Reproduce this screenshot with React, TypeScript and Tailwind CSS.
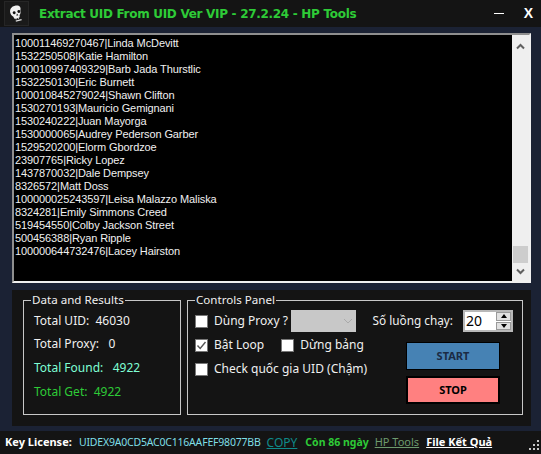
const rows = [
  "100011469270467|Linda McDevitt",
  "1532250508|Katie Hamilton",
  "100010997409329|Barb Jada Thurstlic",
  "1532250130|Eric Burnett",
  "100010845279024|Shawn Clifton",
  "1530270193|Mauricio Gemignani",
  "1530240222|Juan Mayorga",
  "1530000065|Audrey Pederson Garber",
  "1529520200|Elorm Gbordzoe",
  "23907765|Ricky Lopez",
  "1437870032|Dale Dempsey",
  "8326572|Matt Doss",
  "100000025243597|Leisa Malazzo Maliska",
  "8324281|Emily Simmons Creed",
  "519454550|Colby Jackson Street",
  "500456388|Ryan Ripple",
  "100000644732476|Lacey Hairston",
];

function Check({ label, checked }: { label: string; checked?: boolean }) {
  return (
    <div className="flex items-center gap-[6px] whitespace-nowrap">
      <div className="w-[13px] h-[13px] bg-white border border-[#777] flex items-center justify-center">
        {checked && (
          <svg width="11" height="11" viewBox="0 0 11 11" fill="none" stroke="#555" strokeWidth="1.4">
            <path d="M1.5 5.5L4.2 8.5L9.5 2" />
          </svg>
        )}
      </div>
      <span>{label}</span>
    </div>
  );
}

export default function App() {
  return (
    <div className="relative w-[541px] h-[454px] overflow-hidden bg-[#1b2234] flex flex-col text-[12px] text-[#f0f0f0] font-['Noto_Sans','Open_Sans',sans-serif]">
      {/* title bar */}
      <div className="h-[27px] bg-[#141414] flex items-center shrink-0">
        <div className="w-[25px] h-[25px] ml-[4px] bg-[#1a1a1a] border border-[#262626] flex items-center justify-center">
          <svg className="-rotate-[15deg]" width="14" height="18" viewBox="0 0 14 18">
            <path fill="#f2f2f2" d="M7 0.5C3 0.5 0.8 3 0.8 6.4c0 2 .8 3.4 2 4.3l.4 2.2h1l.3 1.2h.8l.2-1h1l.2 1h.8l.3-1.2h1l.4-2.2c1.2-.9 2-2.3 2-4.3C13.2 3 11 .5 7 .5z" />
            <circle cx="4.6" cy="7" r="1.5" fill="#111" />
            <circle cx="9.4" cy="7" r="1.5" fill="#111" />
            <path fill="#111" d="M7 8.6l1 2H6z" />
            <path fill="#ddd" d="M4 15h6v1.2H4z" />
          </svg>
        </div>
        <div className="ml-[10px] text-[#2ecb37] text-[12px] font-bold font-['DejaVu_Sans',sans-serif] whitespace-nowrap tracking-[-0.3px]">
          Extract UID From UID Ver VIP - 27.2.24 - HP Tools
        </div>
        <div className="ml-auto flex items-center">
          <div className="w-[10px] h-[1.5px] bg-white mr-[20px]"></div>
          <div className="text-white font-bold text-[14px] mr-[8px] font-['Liberation_Sans',sans-serif]">X</div>
        </div>
      </div>

      {/* result list */}
      <div className="mt-[6px] ml-[12px] mr-[10px] h-[250px] shrink-0 flex bg-black border-t-2 border-l-2 border-[#8f8f8f] border-r-2 border-b-2 border-r-[#f0f0f0] border-b-[#f0f0f0]">
        <div className="flex-1 pt-[2px] pl-[1px] text-[11px] tracking-[-0.1px] text-[#f0f0f0] leading-[13px] overflow-hidden font-['Liberation_Sans',sans-serif]">
          {rows.map(r => (
            <div key={r} className="h-[13px] whitespace-nowrap">{r}</div>
          ))}
        </div>
        <div className="w-[17px] bg-[#efefef] flex flex-col items-center pt-[8px] pb-[6px]">
          <svg width="9" height="7" viewBox="0 0 9 7" fill="none" stroke="#606060" strokeWidth="2"><path d="M1 5.5L4.5 2L8 5.5" /></svg>
          <div className="flex-1"></div>
          <div className="w-[15px] h-[17px] bg-[#cdcdcd] mb-[5px]"></div>
          <svg width="9" height="7" viewBox="0 0 9 7" fill="none" stroke="#606060" strokeWidth="2"><path d="M1 1.5L4.5 5L8 1.5" /></svg>
        </div>
      </div>

      {/* panel */}
      <div className="mt-[7px] ml-[12px] mr-[10px] h-[136px] shrink-0 bg-[#141414] flex gap-[6px] pl-[11px] pt-[3px]">
        <fieldset className="w-[158px] h-[122px] shrink-0 border border-[#c8c8c8] m-0">
          <legend className="ml-[7px] px-[1px] text-[11.6px] leading-[14px]">Data and Results</legend>
          <div className="flex flex-col mt-[2px] pl-[10px] text-[12px] whitespace-nowrap">
            <div className="h-[23px] flex items-center">Total UID:&nbsp;&nbsp;46030</div>
            <div className="h-[23px] flex items-center">Total Proxy:&nbsp;&nbsp;&nbsp;0</div>
            <div className="h-[25px] flex items-center text-[#7fffd4]">Total Found:&nbsp;&nbsp;&nbsp;4922</div>
            <div className="h-[24px] flex items-center text-[#2ecb37]">Total Get:&nbsp;&nbsp;4922</div>
          </div>
        </fieldset>
        <fieldset className="w-[336px] h-[122px] shrink-0 border border-[#c8c8c8] m-0">
          <legend className="ml-[7px] px-[1px] text-[11.6px] leading-[14px]">Controls Panel</legend>
          <div className="flex justify-between pl-[7px] pr-[9px] mt-[2px]">
            <div className="flex flex-col">
              <div className="flex items-center gap-[3px] h-[24px]">
                <Check label="Dùng Proxy ?" />
                <div className="w-[65px] h-[22px] bg-[#c8c8c8] flex items-center justify-end pr-[3px]">
                  <svg width="10" height="6" viewBox="0 0 10 6" fill="none" stroke="#aaa"><path d="M1 1L5 5L9 1" /></svg>
                </div>
              </div>
              <div className="flex items-center gap-[17px] h-[24px]">
                <Check label="Bật Loop" checked />
                <Check label="Dừng bảng" />
              </div>
              <div className="flex items-center h-[24px]">
                <Check label="Check quốc gia UID (Chậm)" />
              </div>
            </div>
            <div className="flex flex-col items-end">
              <div className="flex items-center h-[24px] gap-[10px] whitespace-nowrap">
                <span className="text-[11.8px]">Số luồng chạy:</span>
                <div className="w-[50px] h-[22px] bg-white border-2 border-[#b8b8b8] flex text-black text-[14px] leading-[18px] pl-[1px]">
                  <span className="flex-1">20</span>
                  <div className="w-[15px] flex flex-col gap-[1px] bg-white">
                    <div className="flex-1 bg-[#e1e1e1] border border-[#999] flex items-center justify-center">
                      <div className="w-0 h-0 border-x-[3px] border-x-transparent border-b-[4px] border-b-black"></div>
                    </div>
                    <div className="flex-1 bg-[#e1e1e1] border border-[#999] flex items-center justify-center">
                      <div className="w-0 h-0 border-x-[3px] border-x-transparent border-t-[4px] border-t-black"></div>
                    </div>
                  </div>
                </div>
              </div>
              <div className="mt-[9px] mr-[13px] flex flex-col gap-[6px]">
                <button className="w-[94px] h-[28px] bg-[#4682b4] border border-black text-[#1b2b44] font-bold text-[11px]">START</button>
                <button className="w-[94px] h-[28px] bg-[#ff8080] border-2 border-black text-black font-bold text-[11px]">STOP</button>
              </div>
            </div>
          </div>
        </fieldset>
      </div>

      {/* footer */}
      <div className="mt-[5px] flex-1 bg-[#141414] flex items-center pl-[5px] whitespace-nowrap text-[11px]">
        <span className="font-bold text-white w-[74px]">Key License:</span>
        <span className="text-[#7fdfe6] text-[10.5px] tracking-[-0.2px]">UIDEX9A0CD5AC0C116AAFEF98077BB</span>
        <span className="ml-[6px] text-[#0f8a8a] underline text-[12px]">COPY</span>
        <span className="ml-[8px] text-[#2ecb37] font-bold text-[10.5px]">Còn 86 ngày</span>
        <span className="ml-[6px] text-[#6d9a6d] underline text-[11px]">HP Tools</span>
        <span className="ml-[7px] text-white underline font-bold text-[11px]">File Kết Quả</span>
      </div>

      {/* resize grip */}
      <svg className="absolute right-[1px] bottom-[3px]" width="11" height="11" viewBox="0 0 11 11" fill="#c8c8c8">
        <rect x="8" y="0" width="2" height="2" />
        <rect x="4" y="4" width="2" height="2" />
        <rect x="8" y="4" width="2" height="2" />
        <rect x="0" y="8" width="2" height="2" />
        <rect x="4" y="8" width="2" height="2" />
        <rect x="8" y="8" width="2" height="2" />
      </svg>
    </div>
  );
}
